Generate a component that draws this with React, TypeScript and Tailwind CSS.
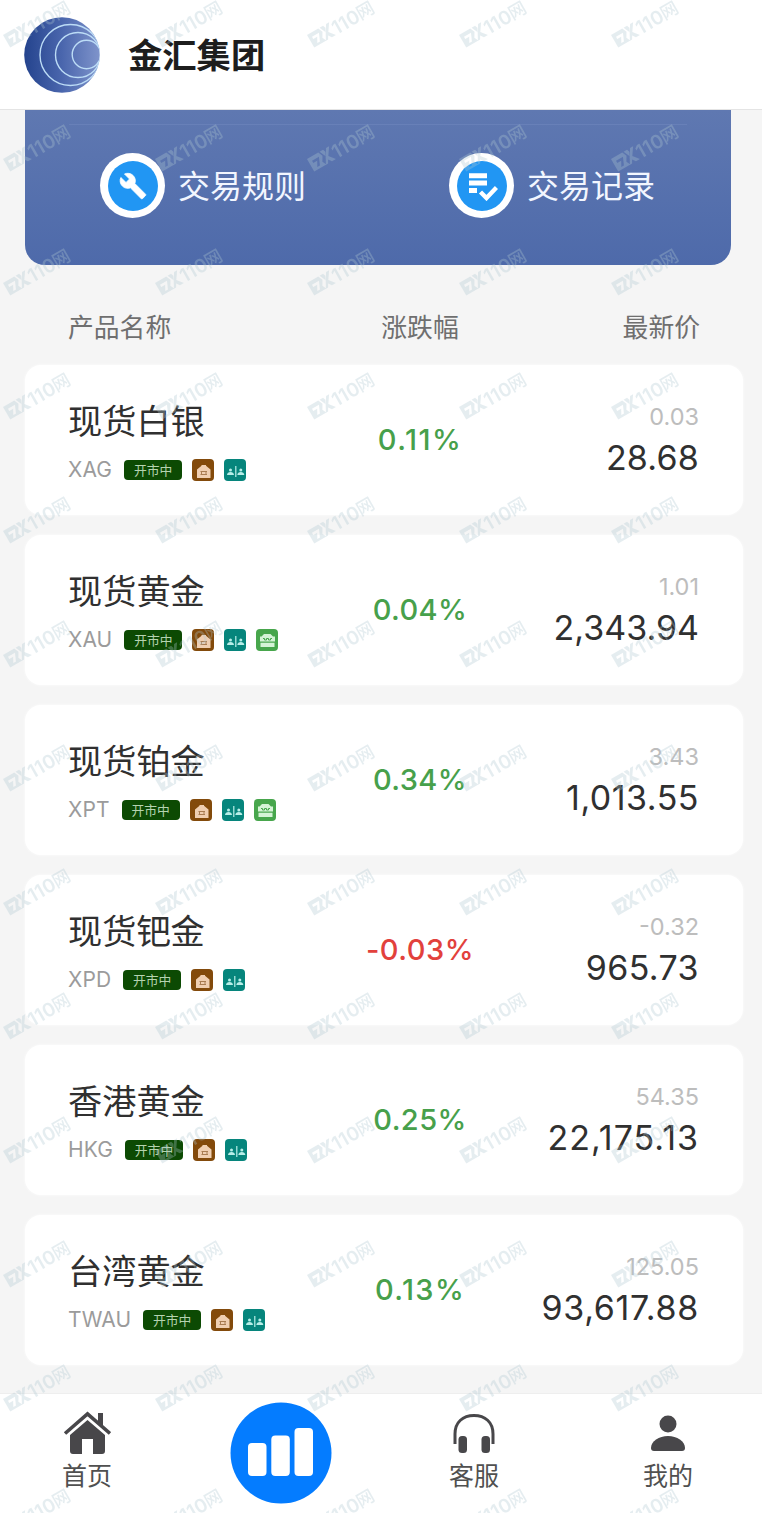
import React from "react";

type Tag = "home" | "people" | "gift";
type Product = {
  name: string;
  code: string;
  change: string;
  changeTracking: string;
  diff: string;
  price: string;
  priceTracking: string;
  tags: Tag[];
};

const products: Product[] = [
  { name: "现货白银", code: "XAG", change: "0.11%", changeTracking: "tracking-[1.5px]", diff: "0.03", price: "28.68", priceTracking: "tracking-[0.2px]", tags: ["home", "people"] },
  { name: "现货黄金", code: "XAU", change: "0.04%", changeTracking: "tracking-[0.4px]", diff: "1.01", price: "2,343.94", priceTracking: "tracking-normal", tags: ["home", "people", "gift"] },
  { name: "现货铂金", code: "XPT", change: "0.34%", changeTracking: "tracking-[0.4px]", diff: "3.43", price: "1,013.55", priceTracking: "tracking-[0.5px]", tags: ["home", "people", "gift"] },
  { name: "现货钯金", code: "XPD", change: "-0.03%", changeTracking: "tracking-[0.5px]", diff: "-0.32", price: "965.73", priceTracking: "tracking-[0.4px]", tags: ["home", "people"] },
  { name: "香港黄金", code: "HKG", change: "0.25%", changeTracking: "tracking-[0.4px]", diff: "54.35", price: "22,175.13", priceTracking: "tracking-[1px]", tags: ["home", "people"] },
  { name: "台湾黄金", code: "TWAU", change: "0.13%", changeTracking: "tracking-[1.4px]", diff: "125.05", price: "93,617.88", priceTracking: "tracking-[0.7px]", tags: ["home", "people"] },
];

function Logo() {
  return (
    <svg width="76" height="76" viewBox="0 0 76 76" className="shrink-0">
      <defs>
        <linearGradient id="logoFill" x1="0" x2="1" y1="0" y2="0">
          <stop offset="0" stopColor="#24438d" />
          <stop offset="0.5" stopColor="#4a66ad" />
          <stop offset="1" stopColor="#7f94cb" />
        </linearGradient>
        <clipPath id="logoClip">
          <circle cx="38" cy="38" r="37.8" />
        </clipPath>
      </defs>
      <circle cx="38" cy="38" r="37.8" fill="url(#logoFill)" />
      <g clipPath="url(#logoClip)" fill="none" stroke="#bcdcf6" strokeWidth="1.4">
        <circle cx="46.5" cy="38" r="30.5" />
        <circle cx="54" cy="38" r="22.5" />
        <circle cx="62.5" cy="37.5" r="14.3" />
      </g>
    </svg>
  );
}

function TagIcon({ kind }: { kind: Tag }) {
  if (kind === "home")
    return (
      <svg width="22" height="22" viewBox="0 0 22 22">
        <rect width="22" height="22" rx="4" fill="#834a0b" />
        <path d="M5 19v-8.500l4.500-3.700V6h4.500v.8l4.500 3.700V19z" fill="#f0cfb2" />
        <path d="M8.500 12.500h6.500M8.500 15.500h6.500M9.500 12v4M14 12v4" stroke="#a97c52" strokeWidth="1" />
      </svg>
    );
  if (kind === "people")
    return (
      <svg width="22" height="22" viewBox="0 0 22 22">
        <rect width="22" height="22" rx="4" fill="#06857c" />
        <g fill="#b8eee8">
          <circle cx="6.5" cy="11" r="1.5" />
          <path d="M3 16c0-4 7-4 7 0z" />
          <rect x="11.2" y="7" width="1.2" height="11" />
          <circle cx="16.8" cy="11" r="1.5" />
          <path d="M13.300 16c0-4 7-4 7 0z" />
        </g>
      </svg>
    );
  return (
    <svg width="22" height="22" viewBox="0 0 22 22">
      <rect width="22" height="22" rx="4" fill="#47a64c" />
      <path d="M5.500 7.500 8 5h6.500L17 7.500h2V12.500H4V7.500zM4.500 13.800h14V18h-14z" fill="#d5f3d6" />
      <path d="M7 9.500h1.500V11h2V9.500h2V11h2V9.500H16" stroke="#47a64c" strokeWidth="1" fill="none" />
    </svg>
  );
}

function RoundIcon({ children }: { children: React.ReactNode }) {
  return (
    <span className="flex size-[65px] shrink-0 items-center justify-center rounded-full bg-white">
      <span className="flex size-[50px] items-center justify-center rounded-full bg-[#2196f3]">{children}</span>
    </span>
  );
}

function ProductCard({ p }: { p: Product }) {
  return (
    <li className="flex h-[150px] rounded-[16px] bg-white pr-[44px] pl-[43px] shadow-[0_0_3px_rgba(255,255,255,0.9)]">
      <div className="w-[260px]">
        <div className="mt-[31px] text-[34.2px] leading-[46px] whitespace-nowrap text-[#303030]">{p.name}</div>
        <div className="mt-[17px] flex h-[22px] items-center">
          <span className="mr-[12px] font-[Inter] text-[21px] tracking-[0.1px] text-[#9b9b9b]">{p.code}</span>
          <span className="flex h-[20px] w-[58px] items-center justify-center rounded-[4px] bg-[#0c4a03] text-[12.800px] leading-none text-[#b5d3b0]">
            开市中
          </span>
          <span className="ml-[10px] flex gap-[10px]">
            {p.tags.map((t) => (
              <TagIcon key={t} kind={t} />
            ))}
          </span>
        </div>
      </div>
      <div
        className={
          "mt-[57px] w-[184px] text-center font-[Inter] text-[29px] leading-[36px] font-medium " +
          p.changeTracking +
          (p.change.startsWith("-") ? " text-[#e2413c]" : " text-[#47a04b]")
        }
      >
        {p.change}
      </div>
      <div className="flex-1 text-right font-[Inter]">
        <div className="mt-[37px] text-[23.500px] leading-[30px] text-[#bdbdbd]">{p.diff}</div>
        <div className={"mt-[5px] text-[34px] leading-[42px] text-[#303030] " + p.priceTracking}>{p.price}</div>
      </div>
    </li>
  );
}

function Watermark() {
  return (
    <svg width="762" height="1513" className="pointer-events-none absolute inset-0">
      <defs>
        <pattern id="mark" width="152" height="124" patternUnits="userSpaceOnUse">
          <g transform="translate(3 35) rotate(-30)" fill="#afc8d0" fillOpacity="0.32">
            <path
              fillRule="evenodd"
              d="M0 0H13L15 5L12 10L14 14.500H0ZM3.500 4V6.500H8L5 12H8L11.500 4Z"
            />
            <path d="M14.500 0h4l1 3-2 3.500zM20.500 2.500 22 0h3.500l-5.500 8 5 6.500h-4.500l-2.500-3.500-2 3.500h-2.500l4-7.500z" />
            <text x="25.500" y="14.800" fontFamily="Inter, sans-serif" fontSize="19" fontWeight="600" textLength="29">110</text>
            <text x="54" y="14.200" fontFamily="Noto Sans CJK SC, sans-serif" fontSize="17.500" fontWeight="500">网</text>
          </g>
        </pattern>
      </defs>
      <rect width="762" height="1513" fill="url(#mark)" />
    </svg>
  );
}

export default function App() {
  return (
    <div className="relative flex h-[1513px] w-[762px] flex-col overflow-hidden bg-[#f5f5f5] font-['Noto_Sans_CJK_SC',sans-serif]">
      <header className="flex h-[110px] shrink-0 items-center border-b border-[#e4e4e4] bg-white pl-[24px]">
        <Logo />
        <h1 className="ml-[28px] pb-[3px] text-[34.300px] leading-[50px] font-bold text-[#1d1d1d]">金汇集团</h1>
      </header>

      <section className="mr-[31px] ml-[25px] h-[155px] shrink-0 rounded-b-[20px] bg-gradient-to-b from-[#5f78b1] to-[#4e6aaa]">
        <div className="mx-[44px] h-[15px] border-b border-[#6880b8]" />
        <div className="flex pt-[28px] pl-[75px]">
          <div className="flex w-[349px] items-center gap-[13px] text-[32px] text-[#f2f6ff]">
            <RoundIcon>
              <svg width="28" height="28" viewBox="0 0 24 24" fill="#fff" stroke="#fff" strokeWidth="0.7">
                <path d="M22.700 19l-9.100-9.100c.9-2.300.4-5-1.500-6.900-2-2-5-2.400-7.400-1.300L9 6 6 9 1.600 4.700C.4 7.100.9 10.100 2.900 12.100c1.900 1.900 4.600 2.400 6.900 1.500l9.100 9.100c.4.4 1 .4 1.400 0l2.300-2.300c.5-.4.5-1.100.1-1.400z" />
              </svg>
            </RoundIcon>
            <span className="pb-[4px] leading-[48px]">交易规则</span>
          </div>
          <div className="flex items-center gap-[13px] text-[32px] text-[#f2f6ff]">
            <RoundIcon>
              <svg width="32" height="30" viewBox="0 0 32 30" fill="#fff">
                <path d="M3 2.300h18v5H3zM3 9.500h18v5H3zM3 17h8v5H3z" />
                <path d="M14.500 21l6 6 10-10.500" fill="none" stroke="#fff" strokeWidth="4.400" />
              </svg>
            </RoundIcon>
            <span className="pb-[4px] leading-[48px]">交易记录</span>
          </div>
        </div>
      </section>

      <div className="mr-[62px] ml-[68px] flex h-[100px] shrink-0 items-center pt-[22px] text-[25.800px] text-[#6f6f6f]">
        <span className="w-[260px]">产品名称</span>
        <span className="w-[184px] text-center">涨跌幅</span>
        <span className="flex-1 text-right">最新价</span>
      </div>

      <ul className="mr-[19px] ml-[25px] flex shrink-0 flex-col gap-[20px]">
        {products.map((p) => (
          <ProductCard key={p.code} p={p} />
        ))}
      </ul>

      <nav className="mt-auto flex h-[120px] shrink-0 border-t border-[#eeeeee] bg-white text-[25px] leading-[34px] text-[#505050]">
        <a className="flex w-[174px] flex-col items-center pt-[16px]">
          <svg width="48" height="46" viewBox="0 0 48 46" fill="#48474a">
            <path d="M35 3h5v15l-5-5z" />
            <path d="M2 23.500 24.500 4 47 23.500" fill="none" stroke="#48474a" strokeWidth="3.600" />
            <path d="M24.500 10 42 25v16a3 3 0 0 1-3 3h-9V29H19v15h-9a3 3 0 0 1-3-3V25z" />
          </svg>
          <span className="mt-[1px]">首页</span>
        </a>
        <a className="flex w-[214px] justify-center pt-[8px]">
          <svg width="102" height="102" viewBox="0 0 102 102" fill="#fff">
            <circle cx="51" cy="51" r="50.500" fill="#047cff" />
            <rect x="18" y="41" width="18.500" height="33" rx="4" />
            <rect x="41.300" y="33.500" width="18.500" height="40.500" rx="4" />
            <rect x="64.500" y="26" width="18.500" height="48" rx="4" />
          </svg>
        </a>
        <a className="flex w-[172px] flex-col items-center pt-[16px]">
          <svg width="46" height="46" viewBox="0 0 46 46" fill="#48474a">
            <path d="M4 34V24C4 12 12 5.500 23 5.500S42 12 42 24v10" fill="none" stroke="#48474a" strokeWidth="3" />
            <rect x="7.500" y="26" width="8.500" height="17" rx="3.500" />
            <rect x="30.500" y="26" width="8.500" height="17" rx="3.500" />
          </svg>
          <span className="mt-[1px]">客服</span>
        </a>
        <a className="flex w-[202px] flex-col items-center pt-[16px] pl-[14px]">
          <svg width="46" height="46" viewBox="0 0 46 46" fill="#48474a">
            <circle cx="23" cy="14" r="8.500" />
            <path d="M6 38c0-7 8-12 17-12s17 5 17 12c0 2-1 3-3 3H9c-2 0-3-1-3-3z" />
          </svg>
          <span className="mt-[1px]">我的</span>
        </a>
      </nav>
      <Watermark />
    </div>
  );
}
